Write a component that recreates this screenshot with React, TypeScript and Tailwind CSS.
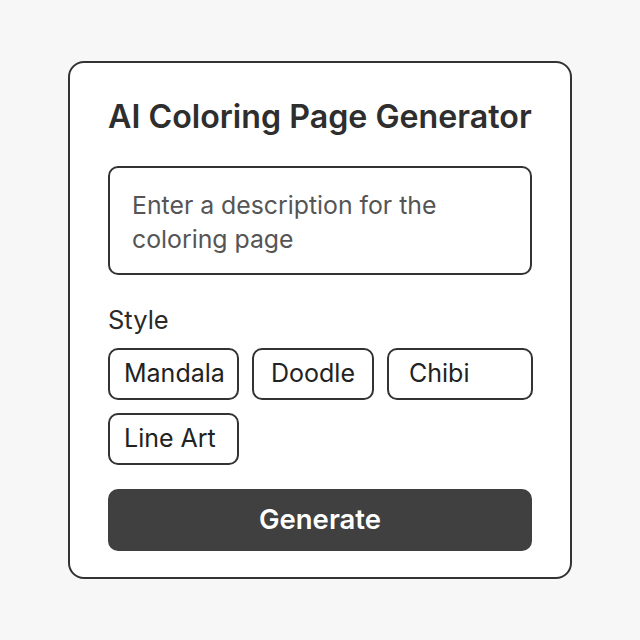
import React from 'react';

const styles = [
  { label: 'Mandala', w: 'w-[131px]', pl: 'pl-[14px]' },
  { label: 'Doodle', w: 'w-[122px]', pl: 'pl-[17px]' },
  { label: 'Chibi', w: 'w-[146px]', pl: 'pl-[20px]' },
  { label: 'Line Art', w: 'w-[131px]', pl: 'pl-[14px]' },
];

export default function App() {
  return (
    <div
      className="flex h-[640px] w-[640px] items-start justify-center bg-[#f7f7f7] pt-[61px]"
      style={{ fontFamily: 'Inter, "Noto Sans", sans-serif' }}
    >
      <div className="w-[504px] rounded-[16px] border-2 border-[#333] bg-white px-[38px] pb-[26px] pt-[36px]">
        <h1 className="whitespace-nowrap text-[32.2px] font-semibold leading-[36px] text-[#2e2e2e]">
          AI Coloring Page Generator
        </h1>

        <div className="mt-[31px] h-[109px] rounded-[10px] border-2 border-[#333] pl-[22px] pr-4 pt-[20px]">
          <p className="text-[24.8px] leading-[34px] text-[#555]">
            Enter a description for the
            <br />
            coloring page
          </p>
        </div>

        <p className="mt-[31px] text-[25.5px] leading-[28px] text-[#2a2a2a]">Style</p>

        <div className="mt-[14px] flex w-[430px] flex-wrap gap-x-[13px] gap-y-[13px]">
          {styles.map((s) => (
            <button
              key={s.label}
              className={`flex h-[52px] items-center rounded-[10px] border-2 border-[#333] bg-white text-[25px] text-[#222] ${s.w} ${s.pl}`}
            >
              {s.label}
            </button>
          ))}
        </div>

        <button className="mt-[24px] flex h-[62px] w-full items-center justify-center rounded-[10px] bg-[#404040] text-[27.5px] font-semibold text-white">
          Generate
        </button>
      </div>
    </div>
  );
}
